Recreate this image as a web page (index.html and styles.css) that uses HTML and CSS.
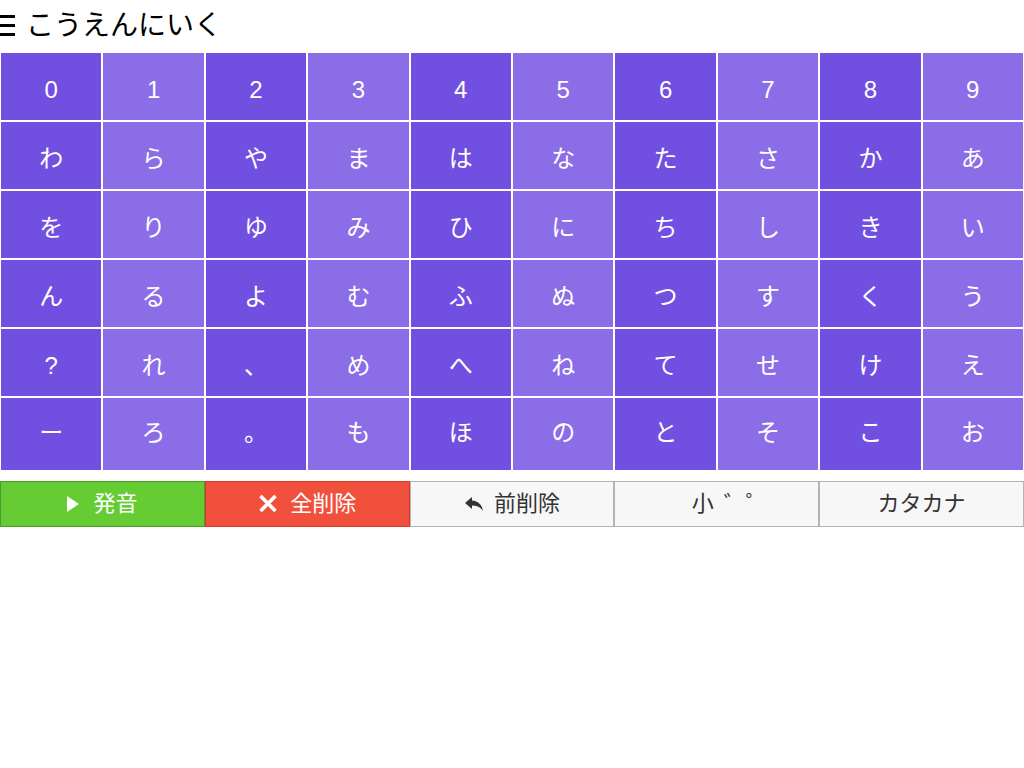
FILE: index.html
```html
<!DOCTYPE html>
<html lang="ja">
<head>
<meta charset="utf-8">
<title>こうえんにいく</title>
<link rel="stylesheet" href="styles.css">
</head>
<body>
<header class="header">
  <svg class="menu-icon" width="15" height="22" viewBox="0 0 15 22"><rect x="0" y="0" width="15" height="3"/><rect x="0" y="9" width="15" height="3"/><rect x="0" y="18" width="15" height="3"/></svg>
  <h1 class="title">こうえんにいく</h1>
</header>
<div class="keys">
  <div class="key">0</div><div class="key">1</div><div class="key">2</div><div class="key">3</div><div class="key">4</div><div class="key">5</div><div class="key">6</div><div class="key">7</div><div class="key">8</div><div class="key">9</div>
  <div class="key">わ</div><div class="key">ら</div><div class="key">や</div><div class="key">ま</div><div class="key">は</div><div class="key">な</div><div class="key">た</div><div class="key">さ</div><div class="key">か</div><div class="key">あ</div>
  <div class="key">を</div><div class="key">り</div><div class="key">ゆ</div><div class="key">み</div><div class="key">ひ</div><div class="key">に</div><div class="key">ち</div><div class="key">し</div><div class="key">き</div><div class="key">い</div>
  <div class="key">ん</div><div class="key">る</div><div class="key">よ</div><div class="key">む</div><div class="key">ふ</div><div class="key">ぬ</div><div class="key">つ</div><div class="key">す</div><div class="key">く</div><div class="key">う</div>
  <div class="key">?</div><div class="key">れ</div><div class="key">、</div><div class="key">め</div><div class="key">へ</div><div class="key">ね</div><div class="key">て</div><div class="key">せ</div><div class="key">け</div><div class="key">え</div>
  <div class="key">ー</div><div class="key">ろ</div><div class="key">。</div><div class="key">も</div><div class="key">ほ</div><div class="key">の</div><div class="key">と</div><div class="key">そ</div><div class="key">こ</div><div class="key">お</div>
</div>
<div class="actions">
  <button class="btn btn-green"><svg class="ico" width="12" height="16" viewBox="0 0 12 16"><polygon points="0,0 12,8 0,16" fill="#fff"/></svg><span>発音</span></button>
  <button class="btn btn-red"><svg class="ico" width="20" height="19" viewBox="0 0 20 19"><path d="M2.5 2 L17.5 17 M17.5 2 L2.5 17" stroke="#fff" stroke-width="3.6" fill="none"/></svg><span>全削除</span></button>
  <button class="btn btn-gray btn-back"><svg class="ico" width="20" height="16" viewBox="0 0 20 16"><path d="M8 1 L1 7 L8 13 V9.5 C13 9.5 16.5 11 19 15 C18 9 14.5 5 8 4.5 Z" fill="#333"/></svg><span>前削除</span></button>
  <button class="btn btn-gray btn-small"><span>小</span><span class="marks">゛゜</span></button>
  <button class="btn btn-gray"><span>カタカナ</span></button>
</div>
</body>
</html>
```

FILE: styles.css
```css
html, body {
  margin: 0;
  padding: 0;
  background: #fff;
  font-family: "Liberation Sans", "Noto Sans CJK JP", sans-serif;
}

.header {
  height: 52px;
  display: flex;
  align-items: center;
  gap: 11px;
}

.menu-icon {
  fill: #000;
  flex: none;
}

.title {
  margin: 0;
  font-family: "Noto Sans CJK JP", sans-serif;
  font-weight: 400;
  font-size: 28px;
  line-height: 1;
  color: #000;
  margin-top: -7px;
}

.keys {
  display: grid;
  grid-template-columns: repeat(10, 1fr);
  grid-template-rows: repeat(5, 69px) 74px;
}

.key {
  box-sizing: border-box;
  border: 1px solid #fff;
  background: #7150e1;
  color: #fff;
  font-size: 24px;
  line-height: 36px;
  padding-top: 19px;
  text-align: center;
}

.key:nth-child(even) {
  background: #8b6de8;
}

.key:nth-child(n+51) {
  padding-top: 17px;
}

.actions {
  display: flex;
  margin-top: 10px;
}

.btn {
  flex: none;
  width: 20%;
  box-sizing: border-box;
  height: 46px;
  margin: 0;
  border: 1px solid #b3b3b3;
  background: #f7f7f7;
  color: #333;
  font-family: "Noto Sans CJK JP", sans-serif;
  font-size: 22px;
  display: flex;
  align-items: center;
  justify-content: center;
  gap: 14px;
  padding: 0 0 6px 0;
}

.btn-green {
  background: #66cc33;
  border-color: #4e9a2c;
  color: #fff;
}

.btn-red {
  background: #f0503c;
  border-color: #d43a28;
  color: #fff;
  gap: 12px;
}

.btn-back {
  gap: 10px;
}

.btn-small {
  gap: 10px;
  padding-left: 26px;
}

.ico {
  flex: none;
  margin-top: 5px;
}
```
